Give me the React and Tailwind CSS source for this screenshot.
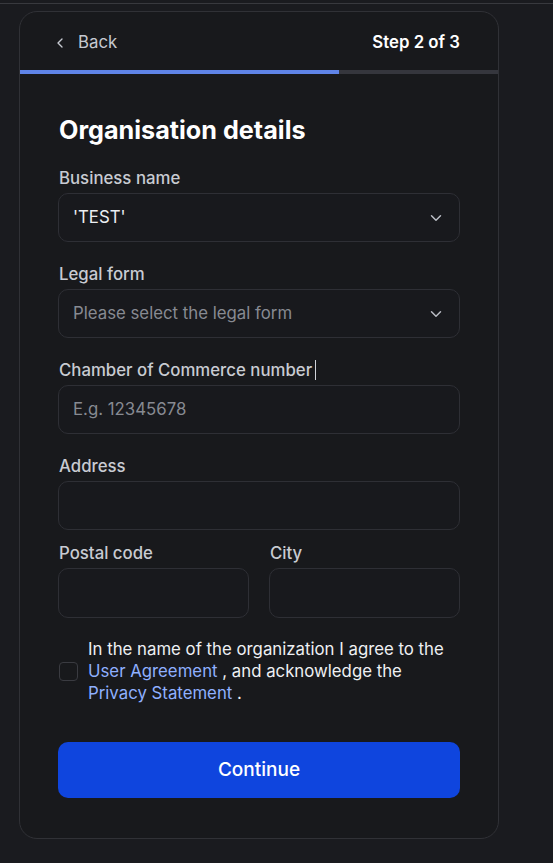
import React from 'react'

function Chevron({ className }) {
  return (
    <svg className={className} viewBox="0 0 24 24" fill="none" stroke="currentColor" strokeWidth="2" strokeLinecap="round" strokeLinejoin="round">
      <path d="m6 9 6 6 6-6" />
    </svg>
  )
}

function Label({ children, extra }) {
  return (
    <div className="flex items-center pl-px text-[16.8px] leading-6 font-medium text-[#c8cbd2] mb-[3px]">
      {children}
      {extra}
    </div>
  )
}

function Box({ children, placeholder, select, tall }) {
  return (
    <div className={`${tall ? 'h-[50px]' : 'h-[49px]'} rounded-[10px] border border-[#2e2f35] bg-[#18191d] flex items-center justify-between pl-[14px] pr-[14px]`}>
      {children ? (
        <span className="text-[16.8px] text-[#eceef2]">{children}</span>
      ) : (
        <span className="text-[16.8px] text-[#878a92]">{placeholder}</span>
      )}
      {select && <Chevron className="w-[18px] h-[18px] text-[#b9bcc4]" />}
    </div>
  )
}

export default function App() {
  return (
    <div className="min-h-[863px] bg-[#1a1b1f] font-['Inter',sans-serif] pt-[3px]">
      <div className="h-px bg-[#38393e]" />
      <div className="pt-[7px] pl-[19px]">
        <div className="w-[480px] rounded-[18px] border border-[#303136] bg-[#18191c] overflow-hidden">
          {/* Header */}
          <div className="h-[58px] flex items-center justify-between pl-[32px] pr-[38px] pt-[4px]">
            <div className="flex items-center gap-[10px] text-[#c6c9d1] text-[16.8px]">
              <svg className="w-4 h-4" viewBox="0 0 24 24" fill="none" stroke="currentColor" strokeWidth="2" strokeLinecap="round" strokeLinejoin="round">
                <path d="m15 18-6-6 6-6" />
              </svg>
              <span>Back</span>
            </div>
            <span className="text-[16.8px] font-semibold text-white">Step 2 of 3</span>
          </div>
          <div className="h-1 bg-[#35363d] flex">
            <div className="w-2/3 bg-[#5f84e8]" />
          </div>

          <div className="px-[38px] pt-10 pb-10">
            <h1 className="text-[25.2px] leading-8 font-bold text-white mb-[20px] pl-px">Organisation details</h1>

            <Label>Business name</Label>
            <Box select>'TEST'</Box>

            <div className="mt-5">
              <Label>Legal form</Label>
              <Box select placeholder="Please select the legal form" />
            </div>

            <div className="mt-5">
              <Label extra={<span className="ml-[3px] inline-block w-px h-5 bg-[#d0d3d9]" />}>Chamber of Commerce number</Label>
              <Box placeholder="E.g. 12345678" />
            </div>

            <div className="mt-5">
              <Label>Address</Label>
              <Box />
            </div>

            <div className="mt-[11px] grid grid-cols-2 gap-5">
              <div>
                <Label>Postal code</Label>
                <Box tall />
              </div>
              <div>
                <Label>City</Label>
                <Box tall />
              </div>
            </div>

            <div className="mt-5 ml-px flex items-center gap-[10px]">
              <div className="w-[19px] h-[19px] shrink-0 rounded-[4px] border border-[#3a3b41] bg-[#18191c]" />
              <p className="text-[16.8px] leading-[22px] text-[#eef0f3]">
                In the name of the organization I agree to the{' '}
                <span className="text-[#8fb0ff]">User Agreement</span> , and acknowledge the{' '}
                <span className="text-[#8fb0ff]">Privacy Statement</span> .
              </p>
            </div>

            <button className="mt-[38px] w-full h-[56px] rounded-[10px] bg-[#0f45de] text-white text-[19px] font-medium">
              Continue
            </button>
          </div>
        </div>
      </div>
    </div>
  )
}
